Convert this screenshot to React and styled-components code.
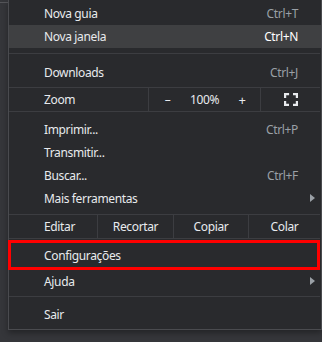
import React from 'react';
import styled, { createGlobalStyle } from 'styled-components';

const Global = createGlobalStyle`
  html, body {
    margin: 0;
    padding: 0;
    background: #35363a;
    overflow: hidden;
  }
  body {
    font-family: 'Noto Sans', 'Open Sans', sans-serif;
    font-size: 12px;
    letter-spacing: -0.35px;
    color: #e8eaed;
  }
`;

const Page = styled.div`
  display: flex;
  width: 322px;
  height: 342px;
`;

const Gutter = styled.div`
  width: 8px;
  flex-shrink: 0;
  border-top: 1px solid #55565a;
  margin-top: 2px;
`;

const Menu = styled.div`
  width: 312px;
  height: 325px;
  padding: 2px 0;
  background: #292a2d;
  border-left: 1px solid #4a4b4f;
  border-right: 1px solid #4a4b4f;
  border-bottom: 1px solid #4a4b4f;
  box-shadow: 0 3px 6px rgba(0, 0, 0, 0.35);
  display: flex;
  flex-direction: column;
`;

const Item = styled.div`
  height: ${(p) => p.$h || '23px'};
  flex-shrink: 0;
  display: flex;
  align-items: center;
  padding: 0 23px 0 ${(p) => p.$pl || '35px'};
  background: ${(p) => (p.$active ? '#3f4042' : 'transparent')};
  position: relative;
`;

const Label = styled.span`
  flex: 1;
`;

const Shortcut = styled.span`
  color: ${(p) => (p.$active ? '#ffffff' : '#9aa0a6')};
`;

const Arrow = styled.span`
  position: absolute;
  right: 6px;
  top: 7px;
  width: 0;
  height: 0;
  border-top: 4px solid transparent;
  border-bottom: 4px solid transparent;
  border-left: 5px solid #9aa0a6;
`;

const Sep = styled.div`
  height: 1px;
  flex-shrink: 0;
  background: #3c3d41;
  margin: ${(p) => p.$m || '0'};
  margin-right: 1px;
`;

const SplitRow = styled.div`
  height: 23px;
  flex-shrink: 0;
  display: grid;
  grid-template-columns: ${(p) => p.$cols};
  border-top: 1px solid #3c3d41;
  border-bottom: 1px solid #3c3d41;
  margin: ${(p) => p.$m || '0'};
  margin-right: 1px;
`;

const Cell = styled.div`
  display: flex;
  align-items: center;
  justify-content: ${(p) => (p.$left ? 'flex-start' : 'center')};
  padding-left: ${(p) => (p.$left ? '35px' : '0')};
  border-left: ${(p) => (p.$divider ? '1px solid #3c3d41' : 'none')};
`;

const ZoomCtl = styled.div`
  display: grid;
  grid-template-columns: 37px 37px 38px;
  border-left: 1px solid #3c3d41;
`;

const ZoomBtn = styled.div`
  display: flex;
  align-items: center;
  justify-content: center;
  font-size: ${(p) => (p.$big ? '13px' : '12px')};
`;

const Marked = styled.div`
  flex-shrink: 0;
  border: 3px solid #ff0000;
  margin: 1px 1px 0 -1px;
`;

const FullscreenIcon = () => (
  <svg width="14" height="13" viewBox="0 0 14 13" fill="none" stroke="#e8eaed" strokeWidth="2.2">
    <path d="M1.1 5V1.1h4M9 1.1h3.9v3.9M12.9 8v3.9H9M5 11.9H1.1V8" />
  </svg>
);

export default function App() {
  return (
    <Page>
      <Global />
      <Gutter />
      <Menu>
        <Item>
          <Label>Nova guia</Label>
          <Shortcut>Ctrl+T</Shortcut>
        </Item>
        <Item $active>
          <Label>Nova janela</Label>
          <Shortcut $active>Ctrl+N</Shortcut>
        </Item>
        <Sep $m="5px 0 7px" />
        <Item>
          <Label>Downloads</Label>
          <Shortcut>Ctrl+J</Shortcut>
        </Item>
        <SplitRow $cols="139px 112px 1fr" $m="3px 0 6px">
          <Cell $left>Zoom</Cell>
          <ZoomCtl>
            <ZoomBtn>–</ZoomBtn>
            <ZoomBtn>100%</ZoomBtn>
            <ZoomBtn $big>+</ZoomBtn>
          </ZoomCtl>
          <Cell $divider>
            <FullscreenIcon />
          </Cell>
        </SplitRow>
        <Item>
          <Label>Imprimir...</Label>
          <Shortcut>Ctrl+P</Shortcut>
        </Item>
        <Item>
          <Label>Transmitir...</Label>
        </Item>
        <Item>
          <Label>Buscar...</Label>
          <Shortcut>Ctrl+F</Shortcut>
        </Item>
        <Item>
          <Label>Mais ferramentas</Label>
          <Arrow />
        </Item>
        <SplitRow $cols="88px 76px 75px 1fr" $m="4px 0 0">
          <Cell $left>Editar</Cell>
          <Cell $divider>Recortar</Cell>
          <Cell $divider>Copiar</Cell>
          <Cell $divider>Colar</Cell>
        </SplitRow>
        <Marked>
          <Item $pl="33px" $h="24px">
            <Label>Configurações</Label>
          </Item>
        </Marked>
        <Item>
          <Label>Ajuda</Label>
          <Arrow />
        </Item>
        <Sep $m="3px 0 6px" />
        <Item>
          <Label>Sair</Label>
        </Item>
      </Menu>
    </Page>
  );
}
